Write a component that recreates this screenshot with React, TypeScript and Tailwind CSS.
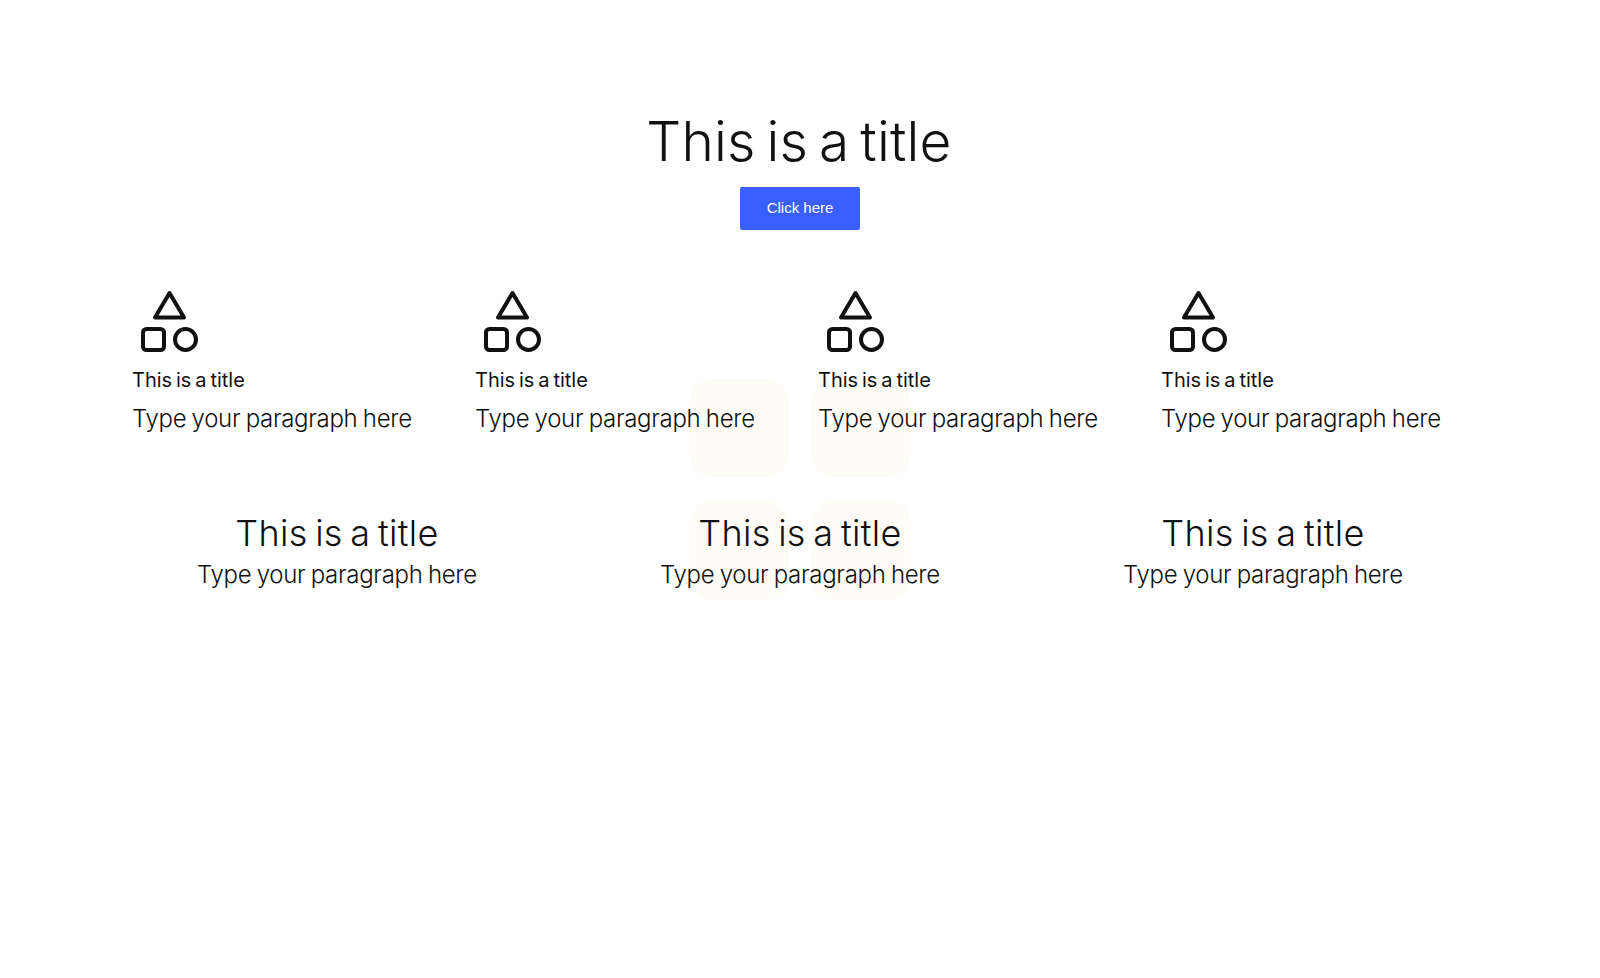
const features = [0, 1, 2, 3];
const columns = [0, 1, 2];

const ShapesIcon = () => (
  <svg className="block" width="72" height="72" viewBox="0 0 72 72" fill="none" stroke="#111111" strokeWidth="4" strokeLinejoin="round">
    <path d="M36.5 7 L51 31.5 L22 31.5 Z" />
    <rect x="10" y="43" width="21" height="21" rx="3.5" />
    <circle cx="52.5" cy="53.5" r="10.5" />
  </svg>
);

export default function App() {
  return (
    <div className="relative min-h-[978px] bg-white font-['Inter',sans-serif] font-light text-[#111111]">
      <div className="absolute left-[689px] top-[378px] grid grid-cols-[100px_100px] gap-[22px]">
        <div className="h-[100px] rounded-[24px] bg-[#fdfcf7]" />
        <div className="h-[100px] rounded-[24px] bg-[#fdfcf7]" />
        <div className="h-[100px] rounded-[24px] bg-[#fdfcf7]" />
        <div className="h-[100px] rounded-[24px] bg-[#fdfcf7]" />
      </div>

      <div className="relative px-[133px] pt-[108px]">
        <div className="flex flex-col items-center">
          <h1 className="-ml-[2px] text-[55px] leading-[66px] tracking-[0.2px] [word-spacing:-4.8px]">This is a title</h1>
          <button className="mt-[13px] h-[43px] w-[120px] rounded-[2px] bg-[#3a5fff] font-['Liberation_Sans',sans-serif] text-[15px] font-normal text-white">
            Click here
          </button>
        </div>

        <div className="mt-[56px] grid grid-cols-4 gap-x-[38px]">
          {features.map((item) => (
            <div key={item}>
              <ShapesIcon />
              <h3 className="mt-[10px] -ml-px text-[20px] leading-[24px] font-normal [word-spacing:-1.75px]">This is a title</h3>
              <p className="mt-[11px] -ml-px text-[24px] leading-[32px] tracking-[-0.3px] [word-spacing:-1.1px]">Type your paragraph here</p>
            </div>
          ))}
        </div>

        <div className="mt-[74px] grid grid-cols-3 gap-x-[55px]">
          {columns.map((item) => (
            <div key={item} className="text-center">
              <h2 className="text-[36px] leading-[48px] tracking-[0.3px] [word-spacing:-2.8px]">This is a title</h2>
              <p className="mt-[2px] text-[24px] leading-[32px] tracking-[-0.3px] [word-spacing:-1.1px]">Type your paragraph here</p>
            </div>
          ))}
        </div>
      </div>
    </div>
  );
}
